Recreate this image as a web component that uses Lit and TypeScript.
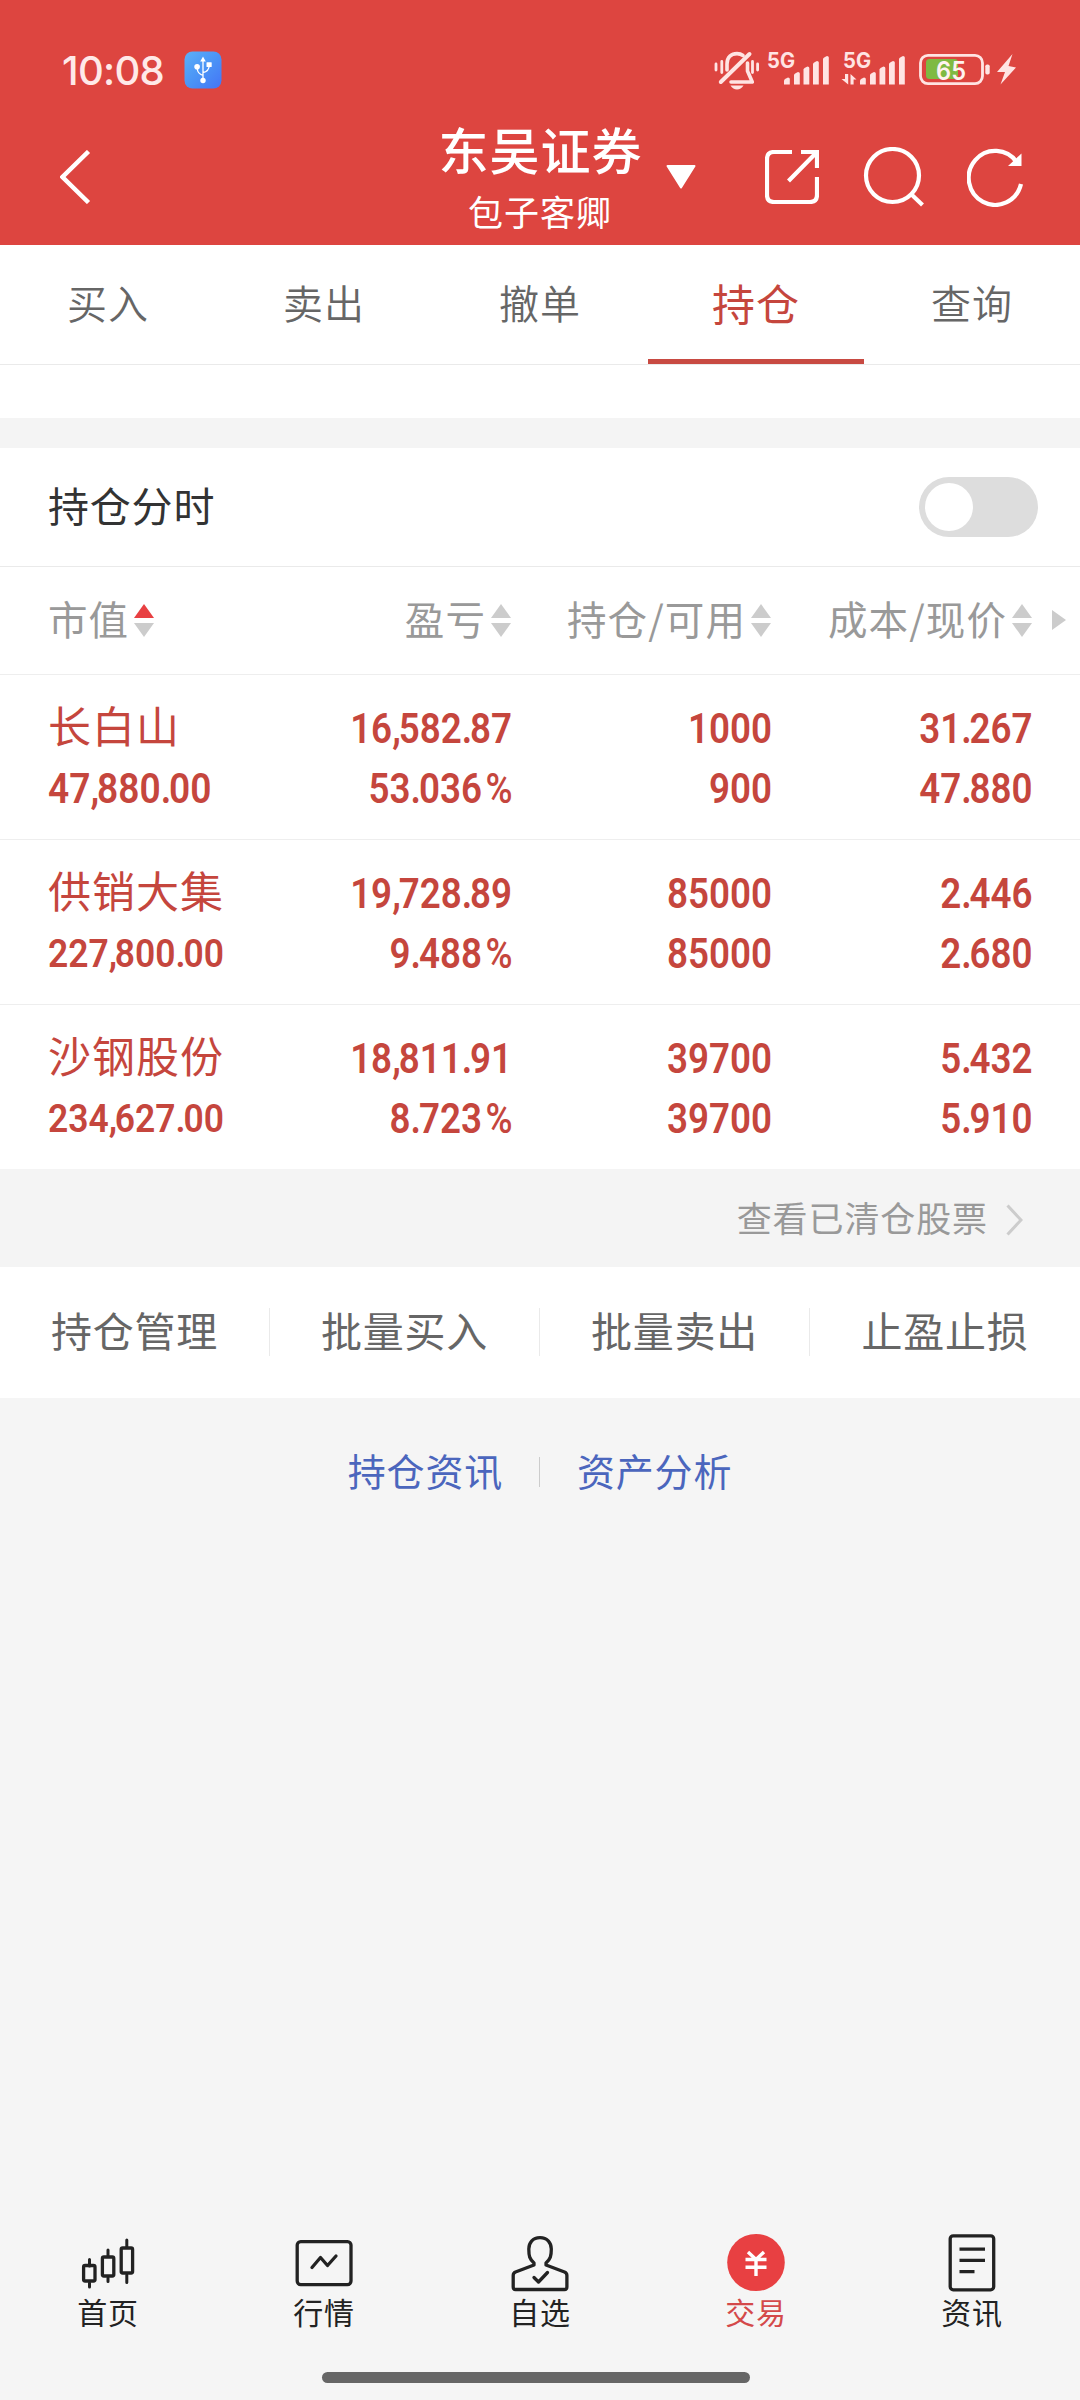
import { LitElement, html, css, svg } from "lit";
import { customElement, property } from "lit/decorators.js";
import { classMap } from "lit/directives/class-map.js";

interface Holding {
  name: string;
  value: string;
  profit: string;
  rate: string;
  held: string;
  available: string;
  cost: string;
  price: string;
}

const HOLDINGS: Holding[] = [
  { name: "长白山", value: "47,880.00", profit: "16,582.87", rate: "53.036%", held: "1000", available: "900", cost: "31.267", price: "47.880" },
  { name: "供销大集", value: "227,800.00", profit: "19,728.89", rate: "9.488%", held: "85000", available: "85000", cost: "2.446", price: "2.680" },
  { name: "沙钢股份", value: "234,627.00", profit: "18,811.91", rate: "8.723%", held: "39700", available: "39700", cost: "5.432", price: "5.910" },
];

const TABS = ["买入", "卖出", "撤单", "持仓", "查询"];
const COLUMNS = ["市值", "盈亏", "持仓/可用", "成本/现价"];
const ACTIONS = ["持仓管理", "批量买入", "批量卖出", "止盈止损"];

@customElement("status-bar")
class StatusBar extends LitElement {
  static styles = css`
    :host { display: block; }
    .bar { height: 105px; display: flex; align-items: flex-start; padding: 51px 64px 0 62px; box-sizing: border-box; }
    .time { font: 500 40px/39px Inter, "Noto Sans", sans-serif; color: #ffe9e8; letter-spacing: -0.7px; width: 122px; white-space: nowrap; }
    .grow { flex: 1; }
    svg { display: block; }
    .tray { margin-top: -11px; }
    .g { font: 700 21px Inter, "Noto Sans", sans-serif; fill: #ffe4e3; }
    .pct { font: 600 26px Inter, "Noto Sans", sans-serif; fill: #fff3f0; }
  `;

  private signal(x: number) {
    const bars = [
      [16, 77.5], [26, 72], [35.5, 66.5], [45, 61], [55, 56],
    ];
    return bars.map(([dx, y]) => svg`<path d="M${x + dx} 84.5V${y + 3}Q${x + dx} ${y + 2} ${x + dx + 2} ${y + 1}L${x + dx + 4} ${y}Q${x + dx + 5.8} ${y} ${x + dx + 5.8} ${y + 1.5}V84.5Z"/>`);
  }

  render() {
    return html`
      <div class="bar">
        <div class="time">10:08</div>
        <svg width="38" height="38" viewBox="183.500 51.500 38 38">
          <defs>
            <linearGradient id="u" x1="0" y1="0" x2="1" y2="1">
              <stop offset="0" stop-color="#5cb0f8" /><stop offset=".5" stop-color="#4b94f6" /><stop offset="1" stop-color="#4474f6" />
            </linearGradient>
          </defs>
          <rect x="184" y="52" width="37" height="37" rx="8" fill="url(#u)" />
          <g stroke="#fff" fill="none" stroke-width="1.300">
            <path d="M202.500 59V79M202.500 76Q197 74 196.700 69M202.500 73Q208.500 72 208.700 66" />
          </g>
          <g fill="#fff">
            <path d="M202.500 57L205.300 62H199.700Z" /><circle cx="202.500" cy="81" r="2.700" /><circle cx="196.600" cy="67.300" r="2.800" /><rect x="206" y="62.700" width="5.200" height="4.800" rx=".5" />
          </g>
        </svg>
        <div class="grow"></div>
        <svg class="tray" width="302" height="52" viewBox="714 40 302 52">
          <g fill="none" stroke="#ffe4e3" stroke-linecap="round" stroke-linejoin="round">
            <path stroke-width="4" d="M720.800 82L749.500 54" />
            <path stroke-width="3.600" d="M727 70V64C727 57 731.500 53.600 737 53.600Q740.500 53.600 743 55.500M747.500 63V71L752.300 82H731" />
            <path stroke-width="2.800" d="M716 64V70M721.800 61.500V72.500M752.500 61.500V72.500M757.600 64V70" />
          </g>
          <path fill="#ffe4e3" d="M730.500 85.500H743.500Q741 89.500 737 89.500T730.500 85.500Z" />
          <text class="g" x="767" y="67.500" textLength="28" lengthAdjust="spacingAndGlyphs">5G</text>
          <text class="g" x="843" y="67.500" textLength="28" lengthAdjust="spacingAndGlyphs">5G</text>
          <g fill="#ffe4e3">
            ${this.signal(768)} ${this.signal(844)}
            <path d="M845 74H848.200V84.500L841.500 79H845ZM850.500 74L856.500 79.500H853.600V84.500H850.500Z" />
            <rect x="985.300" y="64.500" width="4.400" height="10" rx="1.800" />
            <path d="M1012.500 54L997 72H1005L1000.500 84.500L1016 67.500L1008.500 66Z" />
          </g>
          <rect x="926" y="59" width="32" height="20" rx="3.500" fill="#7fba42" />
          <rect x="920.500" y="55.400" width="62" height="28.200" rx="7.500" fill="none" stroke="#ffe4e3" stroke-width="2.800" />
          <text class="pct" x="936" y="79.600" textLength="30" lengthAdjust="spacingAndGlyphs">65</text>
        </svg>
      </div>
    `;
  }
}

@customElement("title-bar")
class TitleBar extends LitElement {
  static styles = css`
    :host { display: block; }
    .bar { height: 140px; display: grid; grid-template-columns: 1fr auto 1fr; align-items: center; padding: 0 56px 0 60px; box-sizing: border-box; color: #fff; }
    .center { text-align: center; align-self: start; width: 206px; margin-right: 5px; }
    .title { font-size: 50px; letter-spacing: 1px; line-height: 68px; padding-top: 9px; font-weight: 500; white-space: nowrap; margin-right: -2px; }
    .sub { font-size: 35px; letter-spacing: 1px; line-height: 48px; padding-top: 5px; font-weight: 400; margin-right: -1px; }
    .tools { display: flex; align-items: center; justify-content: flex-end; padding-top: 4px; }
    .back { padding-top: 4px; }
    svg { display: block; fill: none; stroke: #fff; stroke-width: 4.200; }
    .drop { margin-right: 69px; fill: #fff; stroke-width: 2; stroke-linejoin: round; }
    .out { margin-right: 44px; }
    .find { margin-right: 43px; }
    .tip { fill: #fff; stroke: none; }
  `;
  render() {
    return html`
      <div class="bar">
        <svg class="back" width="31" height="54" viewBox="60 150 31 54"><path d="M88.500 151.500L62.500 177L88.500 202.500" stroke-width="4.500" /></svg>
        <div class="center">
          <div class="title">东吴证券</div>
          <div class="sub">包子客卿</div>
        </div>
        <div class="tools">
          <svg class="drop" width="30" height="24" viewBox="666 165 30 24"><path d="M667.500 166H694.500L681 187.500Z" /></svg>
          <svg class="out" width="54" height="54" viewBox="765 150 54 54">
            <path d="M792 152H774Q767 152 767 159V195Q767 202 774 202H810Q817 202 817 195V177M801 152H817V168M788.500 181L816 153" />
          </svg>
          <svg class="find" width="61" height="60" viewBox="863 147 61 60">
            <circle cx="892.500" cy="175.500" r="26.500" /><path d="M911.500 194.500L922.500 205" />
          </svg>
          <svg width="57" height="59" viewBox="967 147.500 57 59">
            <path d="M1017 162A26.500 27 0 1 0 1021 183.500" /><path class="tip" d="M1021.500 153V165.500H1008Z" />
          </svg>
        </div>
      </div>
    `;
  }
}

@customElement("holdings-table")
class HoldingsTable extends LitElement {
  @property({ attribute: false }) rows: Holding[] = [];

  static styles = css`
    :host { display: block; background: #fff; }
    .row { display: grid; grid-template-columns: 250px 214px 260px 261px 1fr; padding-left: 48px; box-sizing: border-box; border-bottom: 1px solid #eee; }
    .head { height: 108px; align-items: center; color: #999; font-size: 39.5px; letter-spacing: 1.100px; line-height: 56px; padding-bottom: 6px; }
    .col { display: flex; align-items: center; justify-content: flex-end; white-space: nowrap; }
    .col:first-child { justify-content: flex-start; }
    .sort { display: grid; gap: 5px; margin: 0 1px 0 5px; padding-top: 5px; }
    svg { display: block; fill: #ccc; }
    .hot { fill: #e84042; }
    .more { padding: 4px 0 0 19px; }
    .line { height: 165px; color: #c5463d; }
    .line:last-child { height: 164px; border-bottom: 0; }
    .cell { display: flex; flex-direction: column; align-items: flex-end; padding-top: 24px; }
    .cell:first-child { align-items: flex-start; }
    .name { font-size: 43px; letter-spacing: 1px; line-height: 60px; height: 60px; margin-top: -5px; margin-bottom: 5px; white-space: nowrap; }
    .num { font: 600 42px/60px Roboto, "Noto Sans", sans-serif; height: 60px; white-space: nowrap; transform: scaleX(0.875); transform-origin: right center; }
    .cell:first-child .num { transform-origin: left center; transform: scaleX(0.884); }
    .cell:first-child .small { font-size: 39px; transform: scaleX(0.908); }
    .mark { letter-spacing: -2.400px; }
    .pc { margin-left: 4px; font-weight: 500; }
  `;

  private sort(active: boolean) {
    return html`<span class="sort">
      <svg class=${active ? "hot" : ""} width="20" height="14" viewBox="0 0 20 14"><path d="M10 0L20 14H0Z" /></svg>
      <svg width="20" height="14" viewBox="0 0 20 14"><path d="M0 0H20L10 14Z" /></svg>
    </span>`;
  }

  // Commas and dots are set tighter than the digits around them.
  private num(text: string, small = false) {
    const parts = text.split(/([,.%])/).filter((p) => p);
    return html`<div class=${classMap({ num: true, small })}>${parts.map((p) =>
      p === "%" ? html`<span class="pc">%</span>` : p === "," || p === "." ? html`<span class="mark">${p}</span>` : p
    )}</div>`;
  }

  render() {
    return html`
      <div class="row head">
        ${COLUMNS.map((c, i) => html`<div class="col"><span>${c}</span>${this.sort(i === 0)}</div>`)}
        <div class="more"><svg width="14" height="20" viewBox="0 0 14 20"><path d="M0 0L14 10L0 20Z" /></svg></div>
      </div>
      ${this.rows.map(
        (r) => html`<div class="row line">
          <div class="cell"><div class="name">${r.name}</div>${this.num(r.value, r.value.length > 9)}</div>
          <div class="cell">${this.num(r.profit)}${this.num(r.rate)}</div>
          <div class="cell">${this.num(r.held)}${this.num(r.available)}</div>
          <div class="cell">${this.num(r.cost)}${this.num(r.price)}</div>
        </div>`
      )}
    `;
  }
}

@customElement("bottom-nav")
class BottomNav extends LitElement {
  static styles = css`
    :host { display: block; }
    .nav { display: grid; grid-template-columns: repeat(5, 216px); }
    .item { display: flex; flex-direction: column; align-items: center; color: #222; font-size: 30px; letter-spacing: 0.700px; line-height: 39px; height: 99px; font-weight: 400; }
    .on { color: #d4494a; }
    svg { display: block; fill: none; stroke: #222; stroke-width: 3.300; stroke-linecap: round; stroke-linejoin: round; }
    .disc { fill: #e84042; stroke: none; }
    .yen { stroke: #fff; stroke-width: 3.400; stroke-linecap: butt; stroke-linejoin: miter; }
    .home { width: 428px; height: 11px; border-radius: 6px; background: #666; margin: 40px auto 0 322px; }
  `;
  render() {
    const items = [
      ["首页", svg`<path stroke-width="3" d="M89.500 2259.500V2266M89.500 2283V2287M108 2250V2256M108 2278V2281.500M126.800 2240V2247M126.800 2275V2282.500"/><rect x="83.600" y="2265.500" width="11.400" height="15.500" rx="1.500"/><rect x="102.400" y="2257" width="11.400" height="19" rx="1.500"/><rect x="121.200" y="2248" width="11.400" height="25" rx="1.500"/>`],
      ["行情", svg`<rect x="81.200" y="2241.600" width="53.800" height="43" rx="3.500"/><path d="M96 2267.500L104.500 2257.500L111.500 2265.500L120 2256"/>`],
      ["自选", svg`<path d="M108 2237.700C100.500 2237.700 96.800 2243 96.800 2249C96.800 2256 97.500 2259 102 2263V2265L83.500 2272Q81.200 2273 81.200 2275.500V2287Q81.200 2289.500 83.500 2289.500H132.500Q134.900 2289.500 134.900 2287V2275.500Q134.900 2273 132.500 2272L114 2265V2263C118.500 2259 119.300 2256 119.300 2249C119.300 2243 115.500 2237.700 108 2237.700Z"/><path d="M102 2277.500L106.500 2282L115.500 2272.500"/>`],
      ["交易", svg`<ellipse class="disc" cx="108" cy="2262.500" rx="28.800" ry="28.600"/><path class="yen" d="M100 2252L108 2259.500L116 2252M97.500 2259.500H118.500M97.500 2267.300H118.500M108 2259V2276"/>`],
      ["资讯", svg`<rect x="86.200" y="2235.800" width="43.500" height="54" rx="3"/><path stroke-linecap="butt" d="M95.500 2249.200H121M95.500 2260.400H121M95.500 2271.600H110.500"/>`],
    ];
    return html`
      <div class="nav">
        ${items.map(([label, icon]) => html`<div class=${classMap({ item: true, on: label === "交易" })}>
          <svg width="60" height="59" viewBox="78 2233 60 59">${icon}</svg>
          <span>${label}</span>
        </div>`)}
      </div>
      <div class="home"></div>
    `;
  }
}

@customElement("app-root")
class AppRoot extends LitElement {
  static styles = css`
    :host { display: block; }
    .page { width: 1080px; height: 2400px; display: flex; flex-direction: column; background: #f5f5f5; overflow: hidden; font-family: "Noto Sans CJK SC", "Noto Sans", sans-serif; }
    .top { background: #dd4540; height: 245px; flex: none; }
    .tabs { display: grid; grid-template-columns: repeat(5, 216px); height: 119px; background: #fff; border-bottom: 1px solid #eaeaea; flex: none; }
    .tab { box-sizing: border-box; height: 119px; padding-top: 29px; text-align: center; font-size: 40px; line-height: 56px; letter-spacing: 1px; color: #666; font-weight: 350; }
    .tab.on { color: #c5463d; font-size: 43px; border-bottom: 5px solid #c84a42; font-weight: 400; }
    .blank { height: 53px; background: #fff; flex: none; border-bottom: 30px solid #f4f4f4; }
    .toggle-row { height: 118px; box-sizing: content-box; background: #fff; border-bottom: 1px solid #eaeaea; display: flex; align-items: center; justify-content: space-between; padding: 0 42px 0 48px; color: #333; font-size: 41px; letter-spacing: 0.800px; line-height: 56px; flex: none; }
    .toggle-row span { padding-bottom: 6px; }
    .switch { width: 119px; height: 60px; border-radius: 30px; background: #ddd; box-sizing: border-box; padding: 6px; }
    .knob { width: 48px; height: 48px; border-radius: 50%; background: #fff; }
    .cleared { height: 98px; flex: none; background: #f4f4f4; display: flex; align-items: center; justify-content: flex-end; padding-right: 57px; color: #999; font-size: 35px; letter-spacing: 0.900px; line-height: 50px; }
    .cleared span { padding-bottom: 3px; }
    .cleared svg { display: block; margin-left: 18px; padding-top: 4px; fill: none; stroke: #ccc; stroke-width: 3; }
    .actions { height: 131px; flex: none; background: #fff; display: grid; grid-template-columns: repeat(4, 270px); align-items: start; padding-top: 41px; box-sizing: border-box; }
    .action { box-sizing: border-box; height: 48px; line-height: 43px; text-align: center; color: #666; font-size: 41px; letter-spacing: 0.800px; border-right: 1px solid #eaeaea; font-weight: 400; }
    .action:last-child { border-right: 0; }
    .links { display: flex; justify-content: center; align-items: center; padding-top: 59px; height: 30px; color: #4b66bd; font-size: 38px; letter-spacing: 0.800px; line-height: 26px; }
    .links span { padding-bottom: 4px; }
    .rule { width: 1px; height: 30px; background: #ccc; margin: 0 37px 0 36px; }
    .fill { flex: 1; }
    .foot { height: 167px; flex: none; }
  `;

  render() {
    return html`
      <div class="page">
        <div class="top"><status-bar></status-bar><title-bar></title-bar></div>
        <div class="tabs">
          ${TABS.map((t) => html`<div class=${classMap({ tab: true, on: t === "持仓" })}>${t}</div>`)}
        </div>
        <div class="blank"></div>
        <div class="toggle-row"><span>持仓分时</span><div class="switch"><div class="knob"></div></div></div>
        <holdings-table .rows=${HOLDINGS}></holdings-table>
        <div class="cleared">
          <span>查看已清仓股票</span>
          <svg width="17" height="32" viewBox="0 0 17 32"><path d="M1.500 1.500L15 16L1.500 30.500" /></svg>
        </div>
        <div class="actions">${ACTIONS.map((a) => html`<div class="action">${a}</div>`)}</div>
        <div class="links"><span>持仓资讯</span><div class="rule"></div><span>资产分析</span></div>
        <div class="fill"></div>
        <div class="foot"><bottom-nav></bottom-nav></div>
      </div>
    `;
  }
}
